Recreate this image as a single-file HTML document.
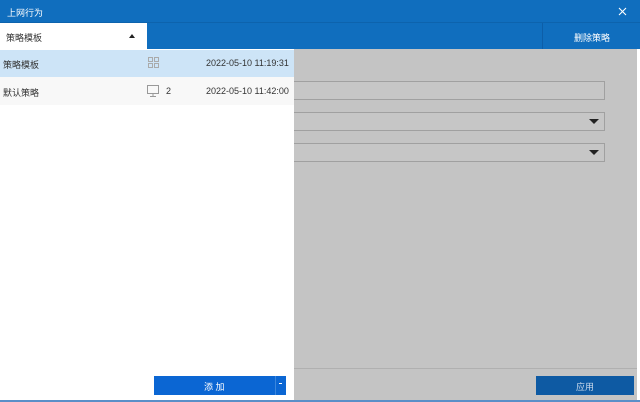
<!DOCTYPE html>
<html><head><meta charset="utf-8"><style>
*{margin:0;padding:0;box-sizing:border-box}
body{width:640px;height:402px;overflow:hidden;position:relative;background:#c4c4c4;font-family:"Liberation Sans","Noto Sans CJK SC",sans-serif;font-size:9px;color:#333}
.a{position:absolute}
</style></head><body>
<div class="a" style="left:0;top:0;width:640px;height:22px;background:#106ebe"></div>
<div class="a" style="left:7px;top:6px;color:#fff;font-size:9px">上网行为</div>
<svg class="a" style="left:329px;top:0" width="1" height="1"></svg>
<svg class="a" style="left:618px;top:7px" width="9" height="9"><path d="M1 1L8 8M8 1L1 8" stroke="#fff" stroke-width="1.1"/></svg>
<div class="a" style="left:0;top:22px;width:640px;height:27px;background:#106ebe;border-top:1px solid #0d63ad"></div>
<div class="a" style="left:542px;top:23px;width:1px;height:26px;background:#0d5ea8"></div>
<div class="a" style="left:574px;top:31px;color:#fff">删除策略</div>
<div class="a" style="left:0;top:23px;width:147px;height:26px;background:#fff"></div>
<div class="a" style="left:6px;top:31px">策略模板</div>
<div class="a" style="left:129px;top:34px;width:0;height:0;border-left:3px solid transparent;border-right:3px solid transparent;border-bottom:4px solid #222"></div>
<div class="a" style="left:637px;top:49px;width:3px;height:353px;background:#fff"></div>
<div class="a" style="left:0;top:400px;width:640px;height:2px;background:#5a8fc8"></div>
<div class="a" style="left:294px;top:368px;width:343px;height:1px;background:#b0b0b0"></div>
<div class="a" style="left:280px;top:81px;width:325px;height:19px;border:1px solid #a0a0a0;background:#c6c6c6"></div>
<div class="a" style="left:280px;top:112px;width:325px;height:19px;border:1px solid #a0a0a0;background:#c6c6c6"></div>
<div class="a" style="left:280px;top:143px;width:325px;height:19px;border:1px solid #a0a0a0;background:#c6c6c6"></div>
<div class="a" style="left:589px;top:119px;border-left:5px solid transparent;border-right:5px solid transparent;border-top:5px solid #222"></div>
<div class="a" style="left:589px;top:150px;border-left:5px solid transparent;border-right:5px solid transparent;border-top:5px solid #222"></div>
<div class="a" style="left:0;top:49px;width:294px;height:351px;background:#fff"></div>
<div class="a" style="left:0;top:50px;width:294px;height:27px;background:#cde4f7"></div>
<div class="a" style="left:0;top:77px;width:294px;height:28px;background:#f8f8f8"></div>
<div class="a" style="left:3px;top:58px">策略模板</div>
<div class="a" style="left:3px;top:86px">默认策略</div>
<svg class="a" style="left:148px;top:57px" width="12" height="12"><g fill="none" stroke="#aaa"><rect x="0.5" y="0.5" width="4" height="4"/><rect x="6.5" y="0.5" width="4" height="4"/><rect x="0.5" y="6.5" width="4" height="4"/><rect x="6.5" y="6.5" width="4" height="4"/></g></svg>
<svg class="a" style="left:147px;top:85px" width="13" height="13"><g fill="none" stroke="#999"><rect x="0.5" y="0.5" width="11" height="8"/><path d="M6 9v2M3 11.5h6"/></g></svg>
<div class="a" style="left:166px;top:86px">2</div>
<div class="a" style="left:206px;top:58px">2022-05-10 11:19:31</div>
<div class="a" style="left:206px;top:86px">2022-05-10 11:42:00</div>
<div class="a" style="left:154px;top:376px;width:132px;height:19px;background:#0b66d3"></div>
<div class="a" style="left:275px;top:376px;width:1px;height:19px;background:#3b86dc"></div>
<div class="a" style="left:204px;top:380px;color:#fff">添 加</div>
<div class="a" style="left:279px;top:383px;width:3px;height:1px;background:#fff"></div>
<div class="a" style="left:536px;top:376px;width:98px;height:19px;background:#0e5aa3"></div>
<div class="a" style="left:576px;top:380px;color:#c8d8ea">应用</div>
</body></html>
